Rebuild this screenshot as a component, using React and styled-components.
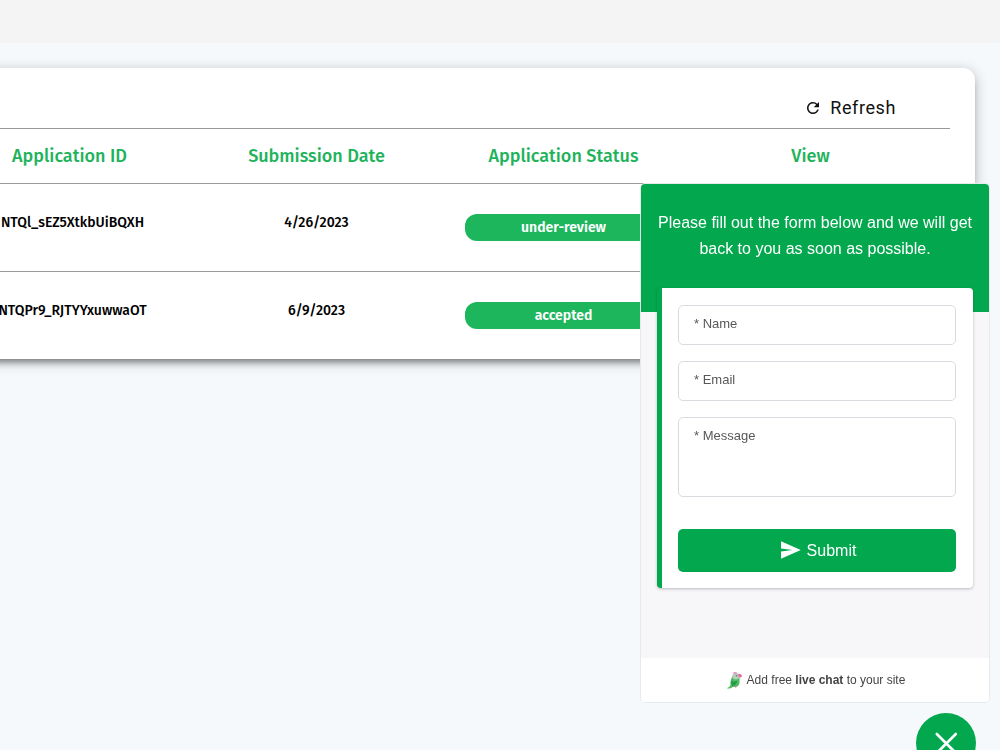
import React from "react";
import styled, { createGlobalStyle } from "styled-components";
import { MdRefresh } from "react-icons/md";

const GlobalStyle = createGlobalStyle`
  * {
    box-sizing: border-box;
  }

  body {
    margin: 0;
    overflow: hidden;
    background-color: #f5f9fc;
  }
`;

const Page = styled.div`
  width: 100vw;
  height: 100vh;
  overflow: hidden;
  font-family: "Fira Sans", "Noto Sans", "Open Sans", sans-serif;
  background-color: #f5f9fc;
`;

const TopBar = styled.div`
  height: 43px;
  background-color: #f4f4f4;
`;

const Card = styled.div`
  width: 1054px;
  height: 291px;
  margin: 25px 0 0 -79px;
  padding: 20px 25px 0;
  background-color: #fff;
  border-radius: 12px;
  box-shadow: 0 6px 6px -3px rgba(0, 0, 0, 0.38),
    0 3px 14px 0 rgba(0, 0, 0, 0.26);
`;

const CardHeader = styled.div`
  display: flex;
  justify-content: flex-end;
  height: 41px;
  padding-right: 54px;
  border-bottom: 1px solid #989898;
`;

const RefreshButton = styled.button`
  display: flex;
  align-items: center;
  gap: 8px;
  height: 39px;
  padding: 0;
  border: none;
  background: none;
  color: #111;
  font-family: Roboto, sans-serif;
  font-size: 18px;
  letter-spacing: 0.6px;
  cursor: pointer;
`;

const Row = styled.div`
  display: grid;
  grid-template-columns: repeat(4, 247px);
  height: ${({ $head }) => ($head ? "55px" : "88px")};
  padding-top: ${({ $head }) => ($head ? "0" : "26px")};
  border-bottom: ${({ $last }) => ($last ? "none" : "1px solid #989c9e")};
`;

const HeadCell = styled.div`
  line-height: 54px;
  text-align: center;
  font-size: 18px;
  font-weight: 500;
  color: #1eb35b;
`;

const Cell = styled.div`
  line-height: 26px;
  text-align: center;
  white-space: nowrap;
  font-size: 14px;
  font-weight: 500;
  padding-left: ${({ $indent }) => $indent || "0"};
  color: #000;
`;

const Status = styled.div`
  width: 197px;
  height: 27px;
  margin: 4px auto 0;
  line-height: 28px;
  text-align: center;
  font-size: 14px;
  font-weight: 600;
  color: #fff;
  background-color: #1db65d;
  border-radius: 12px;
`;

const Widget = styled.section`
  position: fixed;
  left: 640px;
  top: 183px;
  display: flex;
  flex-direction: column;
  width: 350px;
  height: 520px;
  border: 1px solid #e7eaec;
  border-radius: 5px;
  overflow: hidden;
  background-color: #f7f7f9;
  font-family: "Liberation Sans", Arial, sans-serif;
`;

const WidgetHeader = styled.div`
  flex: none;
  height: 128px;
  padding: 26px 8px 0;
  text-align: center;
  font-size: 16px;
  line-height: 26px;
  color: #fff;
  background-color: #03a84e;
`;

const Form = styled.div`
  flex: none;
  display: flex;
  flex-direction: column;
  gap: 16px;
  width: 316px;
  height: 300px;
  margin: -24px 0 0 16px;
  padding: 17px 17px 0 16px;
  border-left: 5px solid #03a84e;
  border-radius: 4px;
  background-color: #fff;
  box-shadow: 0 1px 3px rgba(40, 40, 60, 0.3);
`;

const Field = styled.div`
  flex: none;
  height: ${({ $tall }) => ($tall ? "80px" : "40px")};
  padding: 10px 15px;
  border: 1px solid #d9dbe0;
  border-radius: 5px;
  font-size: 13px;
  line-height: 16px;
  color: #585858;
`;

const SubmitButton = styled.button`
  display: flex;
  align-items: center;
  justify-content: center;
  gap: 6px;
  height: 43px;
  margin-top: 16px;
  padding: 0 0 0 3px;
  border: none;
  border-radius: 5px;
  background-color: #03a84e;
  color: #fff;
  font-family: inherit;
  font-size: 16px;
  cursor: pointer;

  & > svg {
    margin-bottom: 2px;
  }
`;

const WidgetFooter = styled.div`
  display: flex;
  align-items: center;
  justify-content: center;
  gap: 4px;
  height: 44px;
  margin-top: auto;
  padding-left: 1px;
  font-size: 12px;
  color: #444;
  background-color: #fff;
`;

const CloseButton = styled.button`
  position: fixed;
  left: 916px;
  top: 713px;
  display: flex;
  align-items: center;
  justify-content: center;
  width: 60px;
  height: 60px;
  padding: 0;
  border: none;
  border-radius: 50%;
  background-color: #03a84e;
  cursor: pointer;
`;

const SendIcon = () => (
  <svg width="20" height="18" viewBox="0 0 20 18" fill="#fff" aria-hidden="true">
    <path d="M0 .2 19.800 9 0 17.800V10.600L11.500 9 0 7.400Z" />
  </svg>
);

const ParrotIcon = () => (
  <svg width="17" height="17" viewBox="0 0 17 17" aria-hidden="true">
    <path d="M6 5c.5-2 2-3 3.500-3 2.500 0 4 1.500 4 4v4.500c0 2.500-1.500 4.200-4 4.500-1 .1-2-.2-2.800-.1C5 16.200 3 16.700.3 16.300 2.500 15.500 4 14.500 4.500 13 4 10 5 7 6 5Z" fill="#4fbb62" />
    <path d="M6.200 4.500C6.500 2 8 .8 10 .8c2 0 3.500 1.500 3.200 3.700-.3 2-1.500 3-3.200 3-2 0-3.500-1-3.800-3Z" fill="#b9cdbf" />
    <path d="M6.300 1.200C7.500.2 10-.2 11.500.8L9 1.800Z" fill="#e879b5" />
    <path d="M12.500 1.800c2 0 3.500 1 3.500 2.500l-1.600 1.500-2.200-1.800Z" fill="#ee62a5" />
    <path d="M5.500 8.500c1.500 1.500 4 1.500 6 0-.5 3-2 5-5 5.500C5 12.500 4.800 10.500 5.500 8.500Z" fill="#239d45" />
    <circle cx="10.500" cy="3.700" r=".8" fill="#5f7568" />
    <path d="M8.500 14.500l2.200-.3-.8 1.800Z" fill="#e879b5" />
  </svg>
);

const rows = [
  { id: "NTQl_sEZ5XtkbUiBQXH", date: "4/26/2023", status: "under-review" },
  { id: "NTQPr9_RJTYYxuwwaOT", date: "6/9/2023", status: "accepted" },
];

const ApplicationsTable = () => (
  <Card>
    <CardHeader>
      <RefreshButton>
        <MdRefresh size={18} />
        Refresh
      </RefreshButton>
    </CardHeader>
    <Row $head>
      <HeadCell>Application ID</HeadCell>
      <HeadCell>Submission Date</HeadCell>
      <HeadCell>Application Status</HeadCell>
      <HeadCell>View</HeadCell>
    </Row>
    {rows.map((row, i) => (
      <Row key={row.id} $last={i === rows.length - 1}>
        <Cell $indent="6px">{row.id}</Cell>
        <Cell>{row.date}</Cell>
        <Status>{row.status}</Status>
      </Row>
    ))}
  </Card>
);

const ChatWidget = () => (
  <Widget>
    <WidgetHeader>
      Please fill out the form below and we will get back to you as soon as
      possible.
    </WidgetHeader>
    <Form>
      <Field>* Name</Field>
      <Field>* Email</Field>
      <Field $tall>* Message</Field>
      <SubmitButton>
        <SendIcon />
        Submit
      </SubmitButton>
    </Form>
    <WidgetFooter>
      <ParrotIcon />
      <span>
        Add free <b>live chat</b> to your site
      </span>
    </WidgetFooter>
  </Widget>
);

const App = () => (
  <Page>
    <GlobalStyle />
    <TopBar />
    <ApplicationsTable />
    <ChatWidget />
    <CloseButton aria-label="Close">
      <svg width="24" height="24" viewBox="0 0 24 24" fill="none" stroke="#fff" strokeWidth="2.600" strokeLinecap="round">
        <path d="M2.800 3l19 19M21.800 3l-19 19" />
      </svg>
    </CloseButton>
  </Page>
);

export default App;
